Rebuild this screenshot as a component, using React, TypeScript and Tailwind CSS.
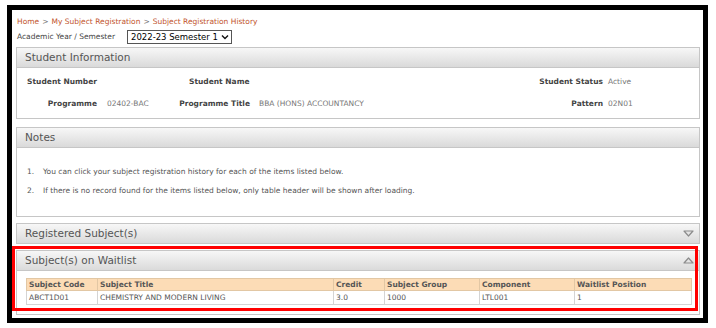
import React from 'react';

const FONT = { fontFamily: '"DejaVu Sans", Verdana, sans-serif' };

function Triangle({ up }: { up?: boolean }) {
  return (
    <svg width="11" height="7" viewBox="0 0 11 7" className="mr-[5px]">
      {up ? (
        <path d="M1 6 L5.5 1 L10 6 Z" fill="#e4e4e4" stroke="#8c8c8c" strokeWidth="1.2" strokeLinejoin="round" />
      ) : (
        <path d="M1 1 L5.5 6 L10 1 Z" fill="#e4e4e4" stroke="#8c8c8c" strokeWidth="1.2" strokeLinejoin="round" />
      )}
    </svg>
  );
}

function PanelHeader({ title, icon }: { title: string; icon?: 'up' | 'down' }) {
  return (
    <div className="h-[19px] flex items-center justify-between pl-[8px] bg-gradient-to-b from-[#f7f7f7] to-[#dadada] text-[10.5px] text-[#555]">
      <span>{title}</span>
      {icon && <Triangle up={icon === 'up'} />}
    </div>
  );
}

const WAITLIST = [
  { code: 'ABCT1D01', title: 'CHEMISTRY AND MODERN LIVING', credit: '3.0', group: '1000', component: 'LTL001', pos: '1' },
];

export default function App() {
  return (
    <div className="w-[716px] h-[328px] bg-white pt-[5px] pl-[7px]" style={FONT}>
      <div className="relative w-[701px] h-[318px] border-[5px] border-black bg-white pl-[4px] pr-[3px]">
        {/* breadcrumb */}
        <div className="h-[15px] mt-[4px] pl-[1px] flex items-center text-[7.5px] text-[#c2552d]">
          <span>Home</span>
          <span className="text-[#777] mx-[3px]">&gt;</span>
          <span>My Subject Registration</span>
          <span className="text-[#777] mx-[3px]">&gt;</span>
          <span>Subject Registration History</span>
        </div>
        <div className="h-[16px] pl-[1px] flex items-center text-[7.5px] text-[#444]">
          <span className="w-[110px]">Academic Year / Semester</span>
          <div className="h-[14px] w-[105px] border border-[#555] flex items-center pl-[3px] text-[8.5px] text-black">
            <span>2022-23 Semester 1</span>
            <svg width="8" height="6" viewBox="0 0 8 6" className="ml-[3px]">
              <path d="M1 1.5 L4 4.5 L7 1.5" fill="none" stroke="#111" strokeWidth="1.4" />
            </svg>
          </div>
        </div>

        {/* Student Information */}
        <div className="mt-[2px] border border-[#c6c6c6]">
          <PanelHeader title="Student Information" />
          <div className="border-t border-[#c6c6c6] h-[51px] pt-[3px] grid grid-cols-[80px_82px_71px_1fr_auto_96px] auto-rows-[22px] items-center text-[7.5px]">
            <span className="text-right font-bold text-[#444]">Student Number</span>
            <span></span>
            <span className="font-bold text-[#444] pl-[10px] whitespace-nowrap">Student Name</span>
            <span></span>
            <span className="text-right font-bold text-[#444]">Student Status</span>
            <span className="pl-[5px] text-[#777]">Active</span>
            <span className="text-right font-bold text-[#444]">Programme</span>
            <span className="pl-[10px] text-[#777]">02402-BAC</span>
            <span className="text-right font-bold text-[#444] whitespace-nowrap">Programme Title</span>
            <span className="pl-[9px] text-[#777]">BBA (HONS) ACCOUNTANCY</span>
            <span className="text-right font-bold text-[#444]">Pattern</span>
            <span className="pl-[5px] text-[#777]">02N01</span>
          </div>
        </div>

        {/* Notes */}
        <div className="mt-[8px] border border-[#c6c6c6]">
          <PanelHeader title="Notes" />
          <ol className="border-t border-[#c6c6c6] h-[69px] pt-[18px] pl-[10px] text-[7.5px] text-[#555]">
            <li className="h-[19px] flex">
              <span className="w-[16px]">1.</span>
              <span>You can click your subject registration history for each of the items listed below.</span>
            </li>
            <li className="h-[19px] flex">
              <span className="w-[16px]">2.</span>
              <span>If there is no record found for the items listed below, only table header will be shown after loading.</span>
            </li>
          </ol>
        </div>

        {/* Registered Subject(s) */}
        <div className="mt-[6px] border border-[#c6c6c6]">
          <PanelHeader title="Registered Subject(s)" icon="down" />
        </div>

        {/* Subject(s) on Waitlist */}
        <div className="mt-[6px] border border-[#c6c6c6]">
          <PanelHeader title="Subject(s) on Waitlist" icon="up" />
          <div className="border-t border-[#c6c6c6] pt-[7px] pb-[9px] pl-[9px] pr-[7px]">
            <table className="w-full border-collapse text-[7.5px] text-[#555]">
              <thead>
                <tr className="bg-[#fcdcb6] h-[12px] text-left">
                  <th className="w-[71px] border border-[#e2c7a4] pl-[2px] font-bold">Subject Code</th>
                  <th className="w-[236px] border border-[#e2c7a4] pl-[2px] font-bold">Subject Title</th>
                  <th className="w-[51px] border border-[#e2c7a4] pl-[2px] font-bold">Credit</th>
                  <th className="w-[95px] border border-[#e2c7a4] pl-[2px] font-bold">Subject Group</th>
                  <th className="w-[95px] border border-[#e2c7a4] pl-[2px] font-bold">Component</th>
                  <th className="border border-[#e2c7a4] pl-[2px] font-bold">Waitlist Position</th>
                </tr>
              </thead>
              <tbody>
                {WAITLIST.map((r) => (
                  <tr key={r.code} className="h-[14px]">
                    <td className="border border-[#d4d4d4] pl-[2px]">{r.code}</td>
                    <td className="border border-[#d4d4d4] pl-[2px]">{r.title}</td>
                    <td className="border border-[#d4d4d4] pl-[2px]">{r.credit}</td>
                    <td className="border border-[#d4d4d4] pl-[2px]">{r.group}</td>
                    <td className="border border-[#d4d4d4] pl-[2px]">{r.component}</td>
                    <td className="border border-[#d4d4d4] pl-[2px]">{r.pos}</td>
                  </tr>
                ))}
              </tbody>
            </table>
          </div>
        </div>

        {/* highlight annotation */}
        <div className="absolute left-0 top-[236px] w-[686px] h-[65px] border-[3px] border-[#ff0000] pointer-events-none" />
      </div>
    </div>
  );
}
